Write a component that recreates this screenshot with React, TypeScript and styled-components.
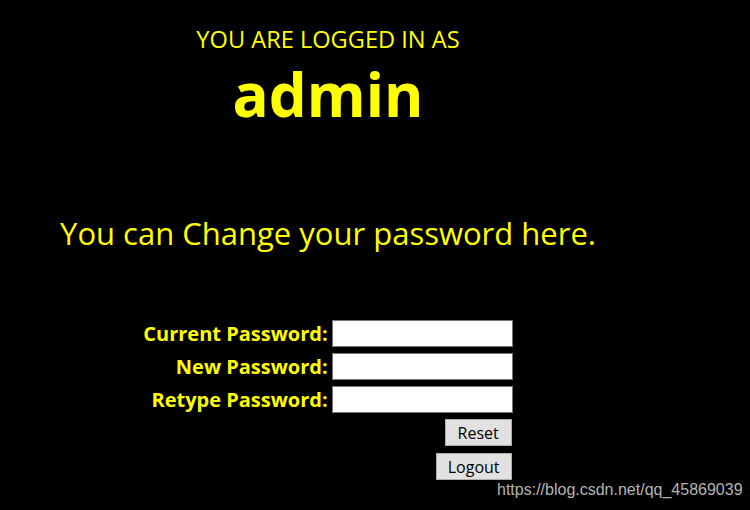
import React from "react";
import styled, { createGlobalStyle } from "styled-components";

const Global = createGlobalStyle`
  html, body { margin: 0; padding: 0; background: #000; }
  body { width: 750px; height: 510px; overflow: hidden; font-family: "Open Sans", "Noto Sans", sans-serif; }
`;

const Page = styled.div`
  position: relative;
  width: 750px;
  height: 510px;
  background: #000;
`;

const Column = styled.div`
  width: 656px;
  display: flex;
  flex-direction: column;
  align-items: center;
  color: #ffff00;
`;

const Caption = styled.div`
  margin-top: 23px;
  font-size: 23.6px;
  line-height: 32px;
`;

const User = styled.div`
  margin-top: 3px;
  font-size: 60px;
  font-weight: 700;
  line-height: 72px;
`;

const Note = styled.div`
  margin-top: 82px;
  font-size: 31px;
  line-height: 42px;
`;

const Form = styled.form`
  margin-top: 66px;
  display: grid;
  grid-template-columns: auto 181px;
  column-gap: 4px;
  row-gap: 6px;
  align-items: center;
`;

const Label = styled.label`
  text-align: right;
  font-size: 20px;
  font-weight: 700;
  line-height: 27px;
`;

const Field = styled.input`
  box-sizing: border-box;
  width: 181px;
  height: 27px;
  margin: 0;
  border: 1px solid #767676;
  background: #fff;
`;

const Actions = styled.div`
  grid-column: 2;
  display: flex;
  flex-direction: column;
  align-items: flex-end;
  gap: 7px;
  padding-right: 1px;
`;

const Button = styled.button<{ $w: number }>`
  box-sizing: border-box;
  width: ${(p) => p.$w}px;
  height: 27px;
  margin: 0;
  padding: 0;
  border: 1px solid #adadad;
  background: #e1e1e1;
  color: #000;
  font-family: "Open Sans", "Noto Sans", sans-serif;
  font-size: 16px;
`;

const Mark = styled.div`
  position: absolute;
  left: 497px;
  top: 480px;
  font-family: "Liberation Sans", Arial, sans-serif;
  font-size: 16px;
  line-height: 20px;
  color: #b4b4b4;
`;

export default function App() {
  return (
    <Page>
      <Global />
      <Column>
        <Caption>YOU ARE LOGGED IN AS</Caption>
        <User>admin</User>
        <Note>You can Change your password here.</Note>
        <Form onSubmit={(e) => e.preventDefault()}>
          <Label>Current Password:</Label>
          <Field type="password" />
          <Label>New Password:</Label>
          <Field type="password" />
          <Label>Retype Password:</Label>
          <Field type="password" />
          <Actions>
            <Button type="reset" $w={67}>Reset</Button>
            <Button type="button" $w={76}>Logout</Button>
          </Actions>
        </Form>
      </Column>
      <Mark>https://blog.csdn.net/qq_45869039</Mark>
    </Page>
  );
}
